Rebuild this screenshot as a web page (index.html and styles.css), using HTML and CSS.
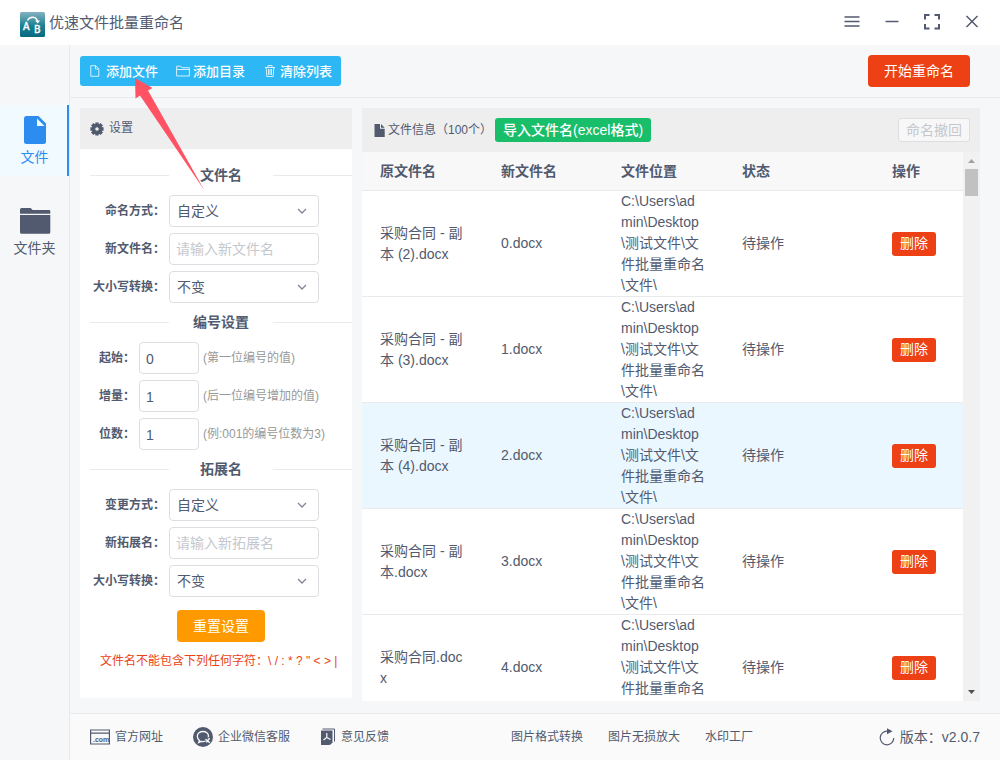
FILE: index.html
```html
<!DOCTYPE html>
<html lang="zh-CN">
<head>
<meta charset="utf-8">
<title>优速文件批量重命名</title>
<link rel="stylesheet" href="styles.css">
</head>
<body>
<div class="app">
  <header class="titlebar">
    <svg class="logo" viewBox="0 0 25 25" aria-hidden="true">
      <defs><linearGradient id="logo-bg" x1="0" y1="0" x2="0" y2="1"><stop offset="0" stop-color="#86b3c1"/><stop offset=".55" stop-color="#1c7f93"/><stop offset="1" stop-color="#07697f"/></linearGradient></defs>
      <rect width="25" height="25" rx="1.5" fill="url(#logo-bg)"/>
      <text x="3" y="18" class="logo-letter">A</text>
      <text x="14" y="21" class="logo-letter">B</text>
      <path d="M7.500 8.500C9.500 4.300 15.500 3.800 17.600 9" fill="none" stroke="#fff" stroke-width="1.300"/>
      <path d="M15 8.500h5l-2.200 3z" fill="#fff"/>
    </svg>
    <h1 class="app-name">优速文件批量重命名</h1>
    <div class="window-tools">
      <button class="win-btn" aria-label="菜单"><svg viewBox="0 0 16 16"><path d="M.5 3h15M.5 7.500h15M.5 12h15"/></svg></button>
      <button class="win-btn" aria-label="最小化"><svg viewBox="0 0 16 16"><path d="M1.500 7.500h13"/></svg></button>
      <button class="win-btn" aria-label="全屏"><svg viewBox="0 0 16 16"><path class="thick" d="M1 5.500V1h4.500M10.500 1H15v4.500M15 10v4.500h-4.500M5.500 14.500H1V10"/></svg></button>
      <button class="win-btn" aria-label="关闭"><svg viewBox="0 0 16 16"><path d="M2.500 2l11 11M13.500 2l-11 11"/></svg></button>
    </div>
  </header>

  <div class="shell">
    <nav class="sidebar">
      <a class="side-item active" href="#file">
        <svg class="side-icon" viewBox="0 0 32 28"><path d="M7 0h12.500L27 7.500v18a2.500 2.500 0 0 1-2.500 2.500h-15-2A2.500 2.500 0 0 1 5 25.500V2.500A2.500 2.500 0 0 1 7 0z" fill="currentColor"/><path d="M18 2.500V10h7.500z" fill="#f0faff"/></svg>
        文件
      </a>
      <a class="side-item" href="#folder">
        <svg class="side-icon" viewBox="0 0 32 28"><path d="M1 6.800V2.600A1.600 1.600 0 0 1 2.600 1h9l2 2h16.800A1.300 1.300 0 0 1 31.300 4.300v2.500zM1 8h30.300v17.200A1.600 1.600 0 0 1 29.700 26.800H2.600A1.600 1.600 0 0 1 1 25.200z" fill="currentColor"/></svg>
        文件夹
      </a>
    </nav>

    <div class="content">
      <div class="toolbar">
        <div class="tool-group">
          <button class="tool-btn"><svg viewBox="0 0 14 14"><path d="M1.800 1.700h5l3 3v7.600h-8zM6.500 1.700V5h3.300"/></svg>添加文件</button>
          <button class="tool-btn"><svg viewBox="0 0 14 14"><path d="M.6 12V2.200h4.200l1 1.500h7.600V12zM.6 5.500h12.800"/></svg>添加目录</button>
          <button class="tool-btn"><svg viewBox="0 0 14 14"><path d="M2 3.500h10M5 3V1.500h4V3M3.200 3.500l.6 9h6.400l.6-9M5.500 5v6M7 5v6M8.500 5v6"/></svg>清除列表</button>
        </div>
        <button class="start-btn">开始重命名</button>
      </div>

      <main class="workspace">
        <section class="settings">
          <div class="settings-head">
            <svg class="gear" viewBox="0 0 14 14"><g fill="currentColor"><path fill-rule="evenodd" d="M7 1.800a5.200 5.200 0 1 1 0 10.400A5.200 5.200 0 0 1 7 1.800zm0 3.400a1.800 1.800 0 1 0 0 3.600 1.800 1.800 0 0 0 0-3.600z"/><path d="M5.300.4h3.400v2.600H5.300zM5.300 11h3.400v2.600H5.300zM.4 5.300H3v3.400H.4zM11 5.300h2.600v3.400H11zM1 3.500L3.500 1l2 2L3 5.500zM13 3.500L10.500 1l-2 2L11 5.500zM1 10.500L3.500 13l2-2L3 8.500zM13 10.500L10.500 13l-2-2L11 8.500z"/></g></svg>
            设置
          </div>
          <form class="settings-body">
            <h2 class="divider"><span>文件名</span></h2>
            <div class="fields">
              <label for="name-mode">命名方式：</label>
              <select id="name-mode" class="control"><option>自定义</option></select>
              <label for="new-name">新文件名：</label>
              <input id="new-name" class="control" type="text" placeholder="请输入新文件名">
              <label for="name-case">大小写转换：</label>
              <select id="name-case" class="control"><option>不变</option></select>
            </div>
            <h2 class="divider"><span>编号设置</span></h2>
            <div class="fields numbers">
              <label for="num-start">起始：</label>
              <input id="num-start" class="control" type="text" value="0">
              <span class="hint">(第一位编号的值)</span>
              <label for="num-step">增量：</label>
              <input id="num-step" class="control" type="text" value="1">
              <span class="hint">(后一位编号增加的值)</span>
              <label for="num-digits">位数：</label>
              <input id="num-digits" class="control" type="text" value="1">
              <span class="hint">(例:001的编号位数为3)</span>
            </div>
            <h2 class="divider"><span>拓展名</span></h2>
            <div class="fields">
              <label for="ext-mode">变更方式：</label>
              <select id="ext-mode" class="control"><option>自定义</option></select>
              <label for="new-ext">新拓展名：</label>
              <input id="new-ext" class="control" type="text" placeholder="请输入新拓展名">
              <label for="ext-case">大小写转换：</label>
              <select id="ext-case" class="control"><option>不变</option></select>
            </div>
            <button class="reset-btn" type="button">重置设置</button>
            <p class="warning">文件名不能包含下列任何字符：\ / : * ? " &lt; &gt; |</p>
          </form>
        </section>

        <section class="files">
          <div class="files-head">
            <svg class="doc" viewBox="0 0 11 13"><path d="M.5 0h5.500v4.700h4.700V13H.5zM7 0l3.700 3.700H7z" fill="currentColor"/></svg>
            <span class="files-count">文件信息（100个）</span>
            <button class="import-btn">导入文件名(excel格式)</button>
            <button class="undo-btn" disabled>命名撤回</button>
          </div>
          <div class="files-body">
            <div class="table-view">
              <table class="file-table">
                <colgroup><col class="col-name"><col class="col-new"><col class="col-path"><col class="col-state"><col></colgroup>
                <thead><tr><th>原文件名</th><th>新文件名</th><th>文件位置</th><th>状态</th><th>操作</th></tr></thead>
                <tbody>
                  <tr><td>采购合同 - 副本 (2).docx</td><td>0.docx</td><td>C:\Users\admin\Desktop\测试文件\文件批量重命名\文件\</td><td>待操作</td><td><button class="del-btn">删除</button></td></tr>
                  <tr><td>采购合同 - 副本 (3).docx</td><td>1.docx</td><td>C:\Users\admin\Desktop\测试文件\文件批量重命名\文件\</td><td>待操作</td><td><button class="del-btn">删除</button></td></tr>
                  <tr class="hovered"><td>采购合同 - 副本 (4).docx</td><td>2.docx</td><td>C:\Users\admin\Desktop\测试文件\文件批量重命名\文件\</td><td>待操作</td><td><button class="del-btn">删除</button></td></tr>
                  <tr><td>采购合同 - 副本.docx</td><td>3.docx</td><td>C:\Users\admin\Desktop\测试文件\文件批量重命名\文件\</td><td>待操作</td><td><button class="del-btn">删除</button></td></tr>
                  <tr><td>采购合同.docx</td><td>4.docx</td><td>C:\Users\admin\Desktop\测试文件\文件批量重命名\文件\</td><td>待操作</td><td><button class="del-btn">删除</button></td></tr>
                </tbody>
              </table>
            </div>
            <div class="scrollbar" aria-hidden="true">
              <svg class="scroll-arrow up" viewBox="0 0 17 17"><path d="M5 11h7L8.500 7z" fill="currentColor"/></svg>
              <div class="scroll-thumb"></div>
              <svg class="scroll-arrow down" viewBox="0 0 17 17"><path d="M5 6h7l-3.500 4z" fill="currentColor"/></svg>
            </div>
          </div>
        </section>
      </main>

      <footer class="footer">
        <a class="foot-link" href="#site"><svg class="icon-site" viewBox="0 0 20 16"><path d="M.6 1h18.800v14H.6zM.6 4.200h18.800" fill="none" stroke="currentColor" stroke-width="1.200"/><text x="3" y="13" class="com-text">.com</text></svg>官方网址</a>
        <a class="foot-link" href="#wechat"><svg class="icon-chat" viewBox="0 0 20 20"><circle cx="10" cy="10" r="10" fill="currentColor"/><path d="M6.500 13.500l-.8 2 2.600-1.200c3.800 1 7.200-1.400 7.200-5C15.500 6.300 13 4.500 10 4.500S4.300 6.500 4.300 9.300c0 1.700.8 3.200 2.200 4.200z" fill="none" stroke="#fafafa" stroke-width="1.300"/><path d="M12 12l3.500-2 1.800 3-1.600 2.500-2.500-.8z" fill="currentColor"/><path d="M13 12.500l3.500 3M16.300 11.500l-2.600 3.500" stroke="#fafafa" stroke-width="1.300" stroke-linecap="round"/></svg>企业微信客服</a>
        <a class="foot-link" href="#feedback"><svg class="icon-feedback" viewBox="0 0 16 18"><path d="M1 2.500h11.500v11L9.500 17H1z" fill="currentColor"/><path d="M2.500 1h12v12.500" fill="none" stroke="currentColor"/><path d="M6.800 5v4.500L3.500 12M6.800 9.500l3.700 2" fill="none" stroke="#fafafa" stroke-width="1.200"/><path d="M10 17v-3h3z" fill="currentColor"/></svg>意见反馈</a>
        <div class="foot-more">
          <a class="foot-link" href="#convert">图片格式转换</a>
          <a class="foot-link" href="#enlarge">图片无损放大</a>
          <a class="foot-link" href="#watermark">水印工厂</a>
        </div>
        <button class="version"><svg class="icon-refresh" viewBox="0 0 16 18"><path d="M8.500 3.200A6.800 6.800 0 1 0 14.800 10" fill="none" stroke="currentColor" stroke-width="1.200"/><path d="M8 .3l5.500 3L8 6.300z" fill="currentColor"/></svg>版本：v2.0.7</button>
      </footer>
    </div>
  </div>

  <svg class="pointer" viewBox="0 0 72 114" aria-hidden="true"><path d="M2 0l17.500 10-4.500 2.500L71.500 112.500 7 17.500 2.500 20.500z" fill="#ff5364"/></svg>
</div>
</body>
</html>
```
FILE: styles.css
```css
* { box-sizing: border-box; }

body {
  margin: 0;
  font-family: "Liberation Sans", "Noto Sans CJK SC", sans-serif;
  font-size: 14px;
  line-height: 21px;
  color: #515a6e;
}

button, input, select { font: inherit; color: inherit; }
button { border: 0; padding: 0; background: none; cursor: pointer; }
a { color: inherit; text-decoration: none; }
svg { display: block; flex: none; }

.app {
  position: relative;
  display: flex;
  flex-direction: column;
  height: 100vh;
  min-height: 760px;
  background: #f5f7f9;
}

/* title bar */
.titlebar {
  display: flex;
  align-items: center;
  height: 45px;
  padding: 0 20px;
  background: #fff;
}
.logo { width: 25px; height: 25px; margin-top: 3px; }
.logo-letter { font: 500 10px "Noto Sans", sans-serif; fill: #fff; stroke: #fff; stroke-width: 0.3px; }
.app-name { margin: 0 0 0 4px; font-size: 15px; font-weight: 400; }
.window-tools { display: flex; gap: 24px; margin: 0 0 2px auto; }
.win-btn svg { width: 16px; height: 16px; fill: none; stroke: #515a6e; stroke-width: 1.5; }
.win-btn .thick { stroke-width: 2; }

/* shell */
.shell { display: flex; flex: 1; min-height: 0; }
.sidebar {
  width: 70px;
  padding-top: 60px;
  border-right: 1px solid #e8eaec;
}
.side-item {
  display: flex;
  flex-direction: column;
  align-items: center;
  gap: 3px;
  height: 71px;
  margin-bottom: 20px;
  padding-top: 11px;
}
.side-item.active {
  color: #2d8cf0;
  background: #f0faff;
  box-shadow: inset -2px 0 #2d8cf0;
}
.side-icon { width: 32px; height: 28px; }
.content { display: flex; flex: 1; flex-direction: column; min-width: 0; }

/* toolbar */
.toolbar {
  display: flex;
  align-items: center;
  justify-content: space-between;
  height: 53px;
  padding: 0 30px 0 10px;
  border-bottom: 1px solid #e8eaec;
}
.tool-group { display: flex; height: 30px; border-radius: 3px; background: #2db7f5; }
.tool-btn {
  display: flex;
  align-items: center;
  gap: 3px;
  padding: 0 9px;
  color: #fff;
  font-size: 13px;
  font-weight: 500;
}
.tool-btn svg { width: 14px; height: 14px; fill: none; stroke: #d5f1fd; }
.start-btn {
  height: 32px;
  padding: 0 16px;
  border-radius: 4px;
  color: #fff;
  background: #ed4014;
}

/* workspace */
.workspace {
  display: flex;
  flex: 1;
  gap: 10px;
  min-height: 0;
  padding: 10px 20px 12px 10px;
}
.settings { width: 272px; margin-bottom: 3px; background: #fff; }
.settings-head {
  display: flex;
  align-items: center;
  gap: 5px;
  height: 41px;
  padding-left: 10px;
  font-size: 12px;
  background: #eee;
}
.gear { width: 14px; height: 14px; }
.settings-body {
  display: flex;
  flex-direction: column;
  padding: 7px 0 0 10px;
}
.divider {
  display: grid;
  grid-template-columns: 79px 1fr 79px;
  align-items: center;
  height: 39px;
  margin: 0;
  font-size: 14px;
  font-weight: 700;
  text-align: center;
}
.divider::before, .divider::after { content: ""; height: 1px; background: #e8eaec; }
.fields {
  display: grid;
  grid-template-columns: 75px 150px;
  gap: 6px 4px;
  align-items: center;
}
.fields.numbers { grid-template-columns: 45px 60px 1fr; }
.fields label { font-size: 12px; font-weight: 700; text-align: right; white-space: nowrap; }
.control {
  width: 100%;
  height: 32px;
  padding: 0 6px;
  border: 1px solid #dcdee2;
  border-radius: 4px;
  background: #fff;
}
.control::placeholder { color: #c5c8ce; opacity: 1; }
select.control {
  padding: 0 7px;
  appearance: none;
  background: #fff url("data:image/svg+xml,%3Csvg xmlns='http://www.w3.org/2000/svg' width='10' height='6'%3E%3Cpath d='M1 1l4 4 4-4' fill='none' stroke='%23808695' stroke-width='1.3'/%3E%3C/svg%3E") no-repeat right 11px center;
}
.numbers .control { padding-top: 2px; }
.hint { font-size: 12px; color: #999; white-space: nowrap; }
.reset-btn {
  align-self: center;
  height: 32px;
  margin: 13px 0 9px;
  padding: 0 16px;
  border-radius: 4px;
  color: #fff;
  background: #f90;
}
.warning { margin: 0 0 0 10px; font-size: 12px; color: #ed4014; white-space: nowrap; }

/* file list */
.files { display: flex; flex: 1; flex-direction: column; min-width: 0; background: #fff; }
.files-head {
  display: flex;
  align-items: center;
  height: 44px;
  padding: 0 10px 0 12px;
  font-size: 12px;
  background: #eee;
}
.doc { width: 11px; height: 13px; margin-right: 3px; }
.import-btn, .undo-btn, .del-btn {
  height: 24px;
  padding: 0 8px;
  border-radius: 3px;
  font-size: 14px;
  color: #fff;
}
.import-btn { margin-left: 3px; font-weight: 500; background: #19be6b; }
.undo-btn {
  margin-left: auto;
  padding: 0 7px;
  border: 1px solid #dcdee2;
  color: #c5c8ce;
  background: #f7f7f7;
}
.del-btn { display: block; background: #ed4014; }
.files-body { display: flex; flex: 1; min-height: 0; }
.table-view { flex: 1; overflow: hidden; }
.file-table { width: 100%; table-layout: fixed; border-collapse: separate; border-spacing: 0; }
.col-name, .col-path { width: 121px; }
.col-new { width: 120px; }
.col-state { width: 150px; }
.file-table th, .file-table td {
  padding: 0 18px;
  border-bottom: 1px solid #e8eaec;
  text-align: left;
  word-break: break-all;
}
.file-table th { height: 39px; background: #f8f8f9; }
.file-table td { height: 106px; }
.file-table td:last-child { padding-right: 0; }
.hovered { background: #ebf7ff; }
.scrollbar {
  display: flex;
  flex-direction: column;
  align-items: center;
  width: 17px;
  background: #f1f1f1;
}
.scroll-arrow { width: 17px; height: 17px; }
.up { color: #a3a3a3; }
.down { margin-top: auto; color: #505050; }
.scroll-thumb { width: 13px; height: 27px; background: #c1c1c1; }

/* footer */
.footer {
  display: flex;
  align-items: center;
  gap: 30px;
  height: 47px;
  padding: 0 20px;
  border-top: 1px solid #e8eaec;
  font-size: 12px;
  background: #fafafa;
}
.foot-link { display: flex; align-items: center; gap: 5px; white-space: nowrap; }
.foot-more { display: flex; gap: 25px; margin-left: 92px; }
.icon-site { width: 20px; height: 16px; }
.com-text { font: bold 7px "Liberation Sans", sans-serif; fill: currentColor; }
.icon-chat { width: 20px; height: 20px; }
.icon-feedback { width: 16px; height: 18px; }
.version { display: flex; align-items: center; gap: 5px; margin-left: auto; font-size: 14px; }
.icon-refresh { width: 16px; height: 18px; }

/* guide arrow laid over the toolbar and the settings panel */
.pointer {
  position: absolute;
  left: 133px;
  top: 78px;
  width: 72px;
  height: 114px;
  pointer-events: none;
}
```
